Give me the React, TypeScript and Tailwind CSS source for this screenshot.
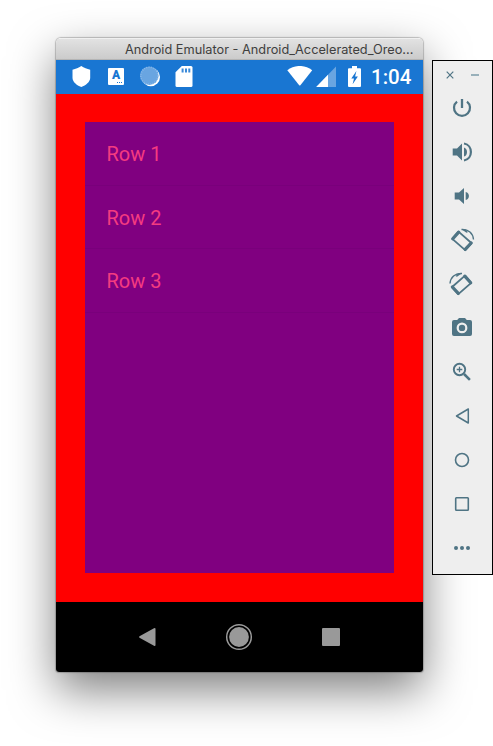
import React from "react";

const teal = "#4f7484";

function StatusBar() {
  return (
    <div className="flex h-[34px] shrink-0 items-start bg-[#1976d2] pt-[6px] text-white">
      <svg className="ml-4 h-[22px] w-[19px] shrink-0" viewBox="0 0 19 22" fill="white">
        <path d="M9.3 0C12 1.7 15 3 18.2 3.7V12C18 16 14 19.300 9.300 21C4.600 19.300 .7 16 .5 12V3.700C3.700 3 6.600 1.700 9.300 0Z" />
      </svg>
      <div className="ml-[17px] mt-[2px] flex h-[17px] w-4 shrink-0 flex-col items-center rounded-[1px] bg-white text-[#1976d2]">
        <span className="mt-[1px] font-['Roboto',sans-serif] text-[12px] leading-[13px] font-black">A</span>
        <span className="mt-0 ml-[7px] flex gap-[1px]">
          <i className="h-[1px] w-[1px] bg-[#1976d2]" />
          <i className="h-[1px] w-[1px] bg-[#1976d2]" />
          <i className="h-[1px] w-[1px] bg-[#1976d2]" />
        </span>
      </div>
      <svg className="ml-[15px] h-[22px] w-[22px] shrink-0" viewBox="0 0 22 22">
        <circle cx="11.800" cy="11" r="9.200" fill="white" />
        <circle cx="10.300" cy="9.700" r="9.300" fill="#69a5e1" />
        <circle cx="10.300" cy="9.700" r="8.500" fill="none" stroke="#8fbcea" strokeWidth="1.500" strokeDasharray=".8 1.500" />
      </svg>
      <svg className="ml-[14px] h-[22px] w-[18px] shrink-0" viewBox="0 0 18 22">
        <path d="M6.800 0H16Q17.500 0 17.500 1.500V19.500Q17.500 21 16 21H2Q.5 21 .5 19.500V6.300Z" fill="white" />
        <path d="M6.600 2.500h2v4h-2zM10 2.500h2v4h-2zM13.300 2.500h2v4h-2z" fill="#3b8ad9" />
      </svg>
      <svg className="ml-[94px] h-[22px] w-[26px] shrink-0" viewBox="0 0 26 22" fill="white">
        <path d="M.3 4.300C7.500-1.500 18-1.500 25.200 4.300L13.400 19.200Q12.800 19.900 12.200 19.200Z" />
      </svg>
      <svg className="ml-[3px] h-[22px] w-[20px] shrink-0" viewBox="0 0 20 22">
        <path d="M.2 21L20 .5V21Z" fill="#69a5e1" />
        <path d="M.2 21L12 8.800V21Z" fill="white" />
      </svg>
      <svg className="ml-3 h-[22px] w-[13px] shrink-0" viewBox="0 0 13 22">
        <path d="M4 0H9V2.200H12Q13 2.200 13 3.200V20Q13 21 12 21H1Q0 21 0 20V3.200Q0 2.200 1 2.200H4Z" fill="white" />
        <path d="M8.400 5L3.300 12.600H6L4.600 18.200L9.900 10.500H7.100Z" fill="#1976d2" />
      </svg>
      <span className="ml-[10px] mt-[-1px] font-['Roboto',sans-serif] text-[20.500px] leading-6 font-medium whitespace-nowrap">1:04</span>
    </div>
  );
}

function Tool({ children }: { children: React.ReactNode }) {
  return (
    <button className="flex h-11 w-full shrink-0 items-center justify-center pr-[2px]">
      <svg className="h-6 w-6 overflow-visible" viewBox="0 0 24 24" fill="none" stroke={teal}>
        {children}
      </svg>
    </button>
  );
}

function RotateShape() {
  return (
    <>
      <path d="M2.300 10.800L8.500 3.600L21.700 15.200L15.200 22.200Z" strokeWidth="1.800" strokeLinejoin="round" />
      <path d="M2.800 10.800L8.700 4.100M15.200 21.300L21.100 15" strokeWidth="3.200" strokeLinecap="round" />
      <path d="M11.500 1.500C18.500 1 23 5.500 23.500 11.500" strokeWidth="1.400" />
      <path d="M11.500 1.200H15.500L17.800 4.200L16.500 4.800Z" fill={teal} stroke="none" />
    </>
  );
}

function Toolbar() {
  return (
    <aside className="mt-[60px] ml-[9px] h-[515px] w-[61px] shrink-0 border border-black bg-[#eee]">
      <div className="flex h-[25px] items-center pt-[3px]">
        <svg className="ml-[13px] h-2 w-2" viewBox="0 0 8 8" stroke={teal} strokeWidth="1.200">
          <path d="M.7 .7L7.300 7.300M7.300 .7L.7 7.300" />
        </svg>
        <span className="ml-[17px] h-[2px] w-2 bg-[#98b0ba]" />
      </div>
      <Tool>
        <path d="M12 3V12" strokeWidth="2.300" />
        <path d="M7 5.600A8 8 0 1 0 17 5.600" strokeWidth="2.200" />
      </Tool>
      <Tool>
        <path d="M2.700 8.500H7L12 3.500V20.500L7 15.500H2.700Z" fill={teal} stroke="none" />
        <path d="M14 7.400C18 8.500 18 15.500 14 16.600Z" fill={teal} stroke="none" />
        <path d="M14 3.500C23.200 5 23.200 19 14 20.500" strokeWidth="2.200" />
      </Tool>
      <Tool>
        <path d="M4.700 8.500H9L14 4V20L9 15.500H4.700Z" fill={teal} stroke="none" />
        <path d="M15.700 8C20 9 20 15 15.700 16Z" fill={teal} stroke="none" />
      </Tool>
      <Tool><RotateShape /></Tool>
      <Tool><g transform="translate(23.500 0) scale(-1 1)"><RotateShape /></g></Tool>
      <Tool>
        <path fillRule="evenodd" d="M9 2H15L16.800 4H20Q22 4 22 6V18Q22 20 20 20H4Q2 20 2 18V6Q2 4 4 4H7.200ZM12 6.500A5.400 5.400 0 1 0 12 17.300A5.400 5.400 0 1 0 12 6.500Z" fill={teal} stroke="none" />
        <circle cx="12" cy="11.900" r="3.200" fill={teal} stroke="none" />
      </Tool>
      <Tool>
        <circle cx="9.500" cy="9.500" r="5.700" strokeWidth="1.900" />
        <path d="M9.500 6.700V12.300M6.700 9.500H12.300" strokeWidth="1.300" />
        <path d="M14 14L19.900 19.900" strokeWidth="2.500" />
      </Tool>
      <Tool><path d="M18.300 5V19L6.500 12Z" strokeWidth="1.500" strokeLinejoin="round" /></Tool>
      <Tool><circle cx="12" cy="12" r="6.500" strokeWidth="1.600" /></Tool>
      <Tool><rect x="5.700" y="5.700" width="12.600" height="12.600" rx=".7" strokeWidth="1.600" /></Tool>
      <Tool><path d="M6 12h.01M12 12h.01M18 12h.01" strokeWidth="4" strokeLinecap="round" /></Tool>
    </aside>
  );
}

export default function App() {
  return (
    <main className="flex h-[746px] w-[493px] items-start overflow-hidden bg-white">
      <section className="mt-[38px] ml-[56px] flex h-[634px] w-[367px] shrink-0 flex-col overflow-hidden rounded-t-[5px] rounded-b-[3px] shadow-[0_18px_46px_rgba(0,0,0,0.5),0_0_1px_1px_rgba(0,0,0,0.22)]">
        <header className="flex h-[22px] shrink-0 items-center border-t border-b border-t-[#f0f0f0] border-b-[#b4b4b4] bg-linear-to-b from-[#e2e2e2] to-[#cbcbcb] pt-[2px] pl-[69px]">
          <span className="font-['Inter',sans-serif] text-[12.750px] leading-[18px] whitespace-nowrap text-[#3f3f3f]">Android Emulator - Android_Accelerated_Oreo...</span>
        </header>
        <StatusBar />
        <div className="flex h-[508px] shrink-0 bg-[#f00] pt-7 pl-[28.500px]">
          <ul className="h-[451px] w-[309px] bg-[#800080] font-['Roboto',sans-serif] text-[20px] text-[#f43b80]">
            {["Row 1", "Row 2", "Row 3"].map((row) => (
              <li key={row} className="flex h-[63.600px] items-center border-b border-[#79007b] pt-[2px] pl-[22px]">{row}</li>
            ))}
          </ul>
        </div>
        <nav className="flex h-[70px] shrink-0 items-center bg-black pl-[82px]">
          <svg className="h-5 w-[19px]" viewBox="0 0 19 20"><path d="M1.500 9.300L16 1.200Q17.500 .5 17.500 2V18Q17.500 19.500 16 18.800L1.500 10.700Q.5 10 1.500 9.300Z" fill="#999" /></svg>
          <svg className="ml-[68px] h-7 w-7" viewBox="0 0 28 28">
            <circle cx="14" cy="14" r="12.300" fill="none" stroke="#999" strokeWidth="1.500" />
            <circle cx="14" cy="14" r="9.900" fill="#999" />
          </svg>
          <span className="ml-[69px] h-[18px] w-[18px] rounded-[1px] bg-[#999]" />
        </nav>
      </section>
      <Toolbar />
    </main>
  );
}
